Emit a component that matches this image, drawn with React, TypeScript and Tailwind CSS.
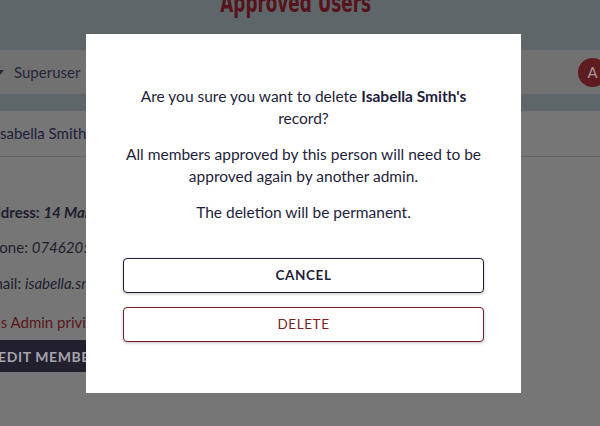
import React from "react";

export default function App() {
  const font = { fontFamily: "Lato, 'Noto Sans', sans-serif" };
  return (
    <div className="relative w-[600px] h-[426px] overflow-hidden bg-[#767676]" style={font}>
      {/* page header */}
      <div className="h-[50px] bg-[#5e666a] flex justify-center">
        <div
          className="ml-[-8px] mt-[-10px] text-[26px] font-bold text-[#56141a] leading-none"
          style={{ fontFamily: "'DejaVu Sans Condensed', 'DejaVu Sans', sans-serif", transform: "scaleX(0.72)" }}
        >
          Approved Users
        </div>
      </div>
      {/* navbar */}
      <div className="h-[44px] bg-[#717171] flex items-center">
        <div className="ml-[-4px] w-0 h-0 border-l-[4px] border-r-[4px] border-t-[5px] border-l-transparent border-r-transparent border-t-[#2a2a36]" />
        <div className="ml-[10px] text-[15px] text-[#26263a]">Superuser</div>
        <div className="flex-1" />
        <div className="mr-[-7px] w-[29px] h-[29px] rounded-full bg-[#5e1b20] flex items-center justify-center text-[15px] text-[#a89898]">
          A
        </div>
      </div>
      <div className="h-[17px] bg-[#5e666a]" />
      {/* content */}
      <div className="flex flex-col">
        <div className="h-[46px] flex items-center border-b border-[#666666] ml-[-4px] text-[15px] text-[#20203a]">
          Isabella Smith
        </div>
        <div className="ml-[-18px] flex flex-col text-[15px] text-[#1e1e30]">
          <div className="mt-[44px] h-[22px] leading-[22px]">
            <span className="font-bold">Address: </span>
            <span className="font-bold italic">14 Main Street</span>
          </div>
          <div className="mt-[13px] h-[22px] leading-[22px]">
            Phone: <span className="italic">07462051234</span>
          </div>
          <div className="mt-[14px] h-[22px] leading-[22px]">
            Email: <span className="italic">isabella.smith@example.com</span>
          </div>
          <div className="mt-[17px] h-[22px] leading-[22px] text-[#5a161b]">Has Admin privileges</div>
          <div className="mt-[7px] w-[140px] h-[32px] bg-[#22202e] flex items-center pl-[16px] text-[14px] font-bold tracking-[0.6px] text-[#a4a4ac]">
            EDIT MEMBER
          </div>
        </div>
      </div>

      {/* overlay + modal */}
      <div className="absolute inset-0">
        <div className="absolute left-[86px] top-[34px] w-[435px] h-[359px] bg-white px-[37px] pt-[51px] flex flex-col">
          <div className="text-center text-[15.5px] leading-[22px] text-[#1e1e3c]">
            <p>
              Are you sure you want to delete <span className="font-bold">Isabella Smith's</span> record?
            </p>
            <p className="mt-[14px]">
              All members approved by this person will need to be approved again by another admin.
            </p>
            <p className="mt-[14px]">The deletion will be permanent.</p>
          </div>
          <button className="mt-[35px] h-[35px] w-full rounded-[4px] border border-[#1e1e3c] bg-white text-[13.5px] font-bold tracking-[0.6px] text-[#1e1e3c] shadow-[0_1px_3px_rgba(0,0,0,0.25)]">
            CANCEL
          </button>
          <button className="mt-[14px] h-[35px] w-full rounded-[4px] border border-[#7a1f24] bg-white text-[13.5px] tracking-[0.6px] text-[#7a1f24] shadow-[0_1px_3px_rgba(0,0,0,0.25)]">
            DELETE
          </button>
        </div>
      </div>
    </div>
  );
}
